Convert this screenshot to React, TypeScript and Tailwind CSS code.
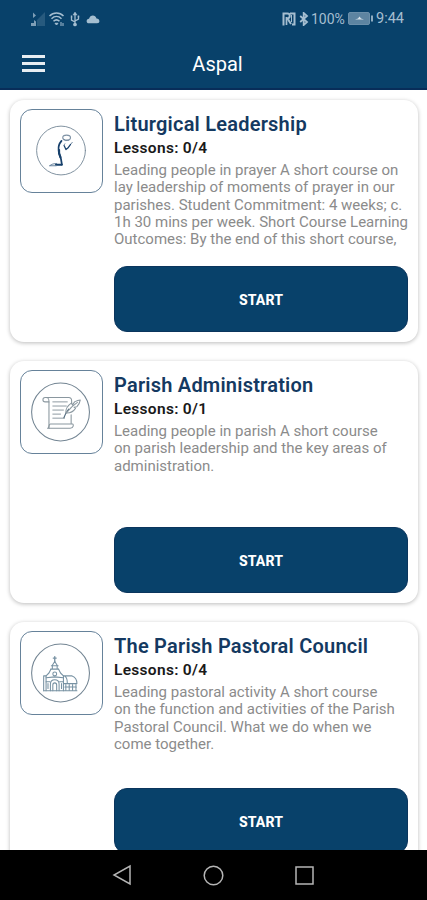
import React from "react";

type Course = {
    title: string;
    lessons: string;
    lines: string[];
    icon: React.ReactNode;
};

const PrayerIcon = () => (
    <svg viewBox="0 0 84 84" className="h-full w-full" fill="none" stroke="#17406b" strokeLinecap="round" strokeLinejoin="round">
        <circle cx="41.500" cy="41.500" r="25.3" stroke="#7c8e9c" strokeWidth="1" />
        <ellipse cx="47.3" cy="28.2" rx="4" ry="2.6" stroke="#7f93a6" strokeWidth="1.2" />
        <path d="M44.500 29.500l2 1.800 3-.6" stroke="#7289a0" strokeWidth="1" />
        <path d="M42 31.500c-2.500 3-3.400 6.500-3 9.500l.4 3.500 2 5.500 1 6" strokeWidth="1.800" />
        <path d="M39.500 41c-.6 3 .5 5 1.500 7.500" strokeWidth="2.200" />
        <path d="M42.300 56.300h-6" strokeWidth="2.200" />
        <path d="M37 54.900l-4 .6-3.500 1.800h7" stroke="#617d99" strokeWidth="1" />
        <path d="M44.800 36.500l1.800 4 2-1.500 2.800-3.800" strokeWidth="1.300" />
        <path d="M44.500 36l1-1.500M52 34.500l1.200-1.500" stroke="#7289a0" strokeWidth="1" />
    </svg>
);

const ScrollIcon = () => (
    <svg viewBox="0 0 84 84" className="h-full w-full" fill="none" stroke="#8a979f" strokeWidth="1.100" strokeLinecap="round" strokeLinejoin="round">
        <circle cx="41" cy="42" r="30" stroke="#738593" strokeWidth="1.100" />
        <path d="M29 31.500h-4c-3 0-3-4.500 0-4.500h24.500c2.500 0 3 1.500 3 3.500v3" />
        <path d="M26 27c3 0 3 2 3 4.500v27.500" />
        <path d="M29 58.800h22c4 0 3.500-4.300 2.500-4.300h-23c-2.500 0-.5 4.300-3 4.300" />
        <path d="M52 45v9" />
        <path d="M33 31.500h15M33 35.800h14M33 40h11M33 44.200h8M33 48.400h12" strokeWidth="1" />
        <path d="M44.500 48c1-3 2.500-6 5-9" stroke="#526b7e" strokeWidth="1.200" />
        <path d="M46.500 43c-.5-5 3-8.500 6-10.500l1 2.500 2-3.500c2-1 4-1.800 6-2-.5 3-2 5.500-3.500 7l-3 .5 1.500 1.200c-2 3-5 5.200-10 4.800z" />
        <path d="M47 43c3-4 7-8 11.500-11" />
    </svg>
);

const ChurchIcon = () => (
    <svg viewBox="0 0 84 84" className="h-full w-full" fill="none" stroke="#7892a3" strokeWidth="1.100" strokeLinecap="round" strokeLinejoin="round">
        <circle cx="41" cy="42" r="30" stroke="#738593" />
        <path d="M35 25v5.500M33.500 26.500h3" strokeWidth="1.400" />
        <path d="M35 30l-2.500 4v4h5v-4zM31.500 34.500h7M31 38h8" />
        <path d="M31 38l-2 4-3 3v15.500M39 38l2 4 3 3v15.500" />
        <circle cx="35" cy="43" r="2" />
        <path d="M26 45h-2.500v15.500M26 47l9-1 9 1" />
        <path d="M30.500 60.500v-7c0-6 9-6 9 0v7M33 60.500v-6c0-3 4-3 4 0v6" />
        <path d="M23.500 60.500h34.500M26 51h4M40 51h4M28 53v5M42 53v5" />
        <path d="M44 45h9c3 1 5 4 5 8h-14M45 45c2 1 3 4 3 7" />
        <path d="M46.500 54v6M50 54v6M53.500 54v6M57 54v6M45.500 56.500h12" />
    </svg>
);

const courses: Course[] = [
    {
        title: "Liturgical Leadership",
        lessons: "Lessons: 0/4",
        lines: [
            "Leading people in prayer A short course on",
            "lay leadership of moments of prayer in our",
            "parishes. Student Commitment: 4 weeks; c.",
            "1h 30 mins per week. Short Course Learning",
            "Outcomes: By the end of this short course,",
        ],
        icon: <PrayerIcon />,
    },
    {
        title: "Parish Administration",
        lessons: "Lessons: 0/1",
        lines: ["Leading people in parish A short course", "on parish leadership and the key areas of", "administration."],
        icon: <ScrollIcon />,
    },
    {
        title: "The Parish Pastoral Council",
        lessons: "Lessons: 0/4",
        lines: [
            "Leading pastoral activity A short course",
            "on the function and activities of the Parish",
            "Pastoral Council. What we do when we",
            "come together.",
        ],
        icon: <ChurchIcon />,
    },
];

const StatusBar = () => (
    <div className="flex h-[37px] items-center justify-between pl-[30px] pr-[23px] text-[#a5bed0]">
        <div className="flex items-center">
            <svg width="16" height="16" viewBox="0 0 16 16" fill="currentColor">
                <path d="M15 1v14H7V9z" opacity=".2" />
                <path d="M3 1.500l3 3L3 7zM1 12h3V9l2 1.500V15H1z" opacity=".75" />
            </svg>
            <svg width="18" height="16" viewBox="0 0 18 16" className="ml-[2px]" fill="none" stroke="currentColor" strokeWidth="1.500">
                <path d="M1.500 5c4-4 10-4 14 0M3.500 7.700c3-2.900 7-2.900 10 0M5.500 10.300c2-1.900 4-1.900 6 0" />
                <path d="M7 12.300h3L8.500 14z" fill="currentColor" strokeWidth="1" />
                <path d="M13 11v4M15 12v3" strokeWidth="1" />
            </svg>
            <svg width="10" height="16" viewBox="0 0 10 16" className="ml-[4px]" fill="none" stroke="currentColor" strokeWidth="1.300">
                <path d="M5 2v11M5 11L1.500 9V6M5 10l3.500-2V5" />
                <path d="M3 4l2-3 2 3z" fill="currentColor" strokeWidth=".5" />
                <circle cx="5" cy="13.500" r="1.200" fill="currentColor" />
                <path d="M.8 5.500h1.500M7.700 5.500h1.500" strokeWidth="2" />
            </svg>
            <svg width="14" height="10" viewBox="0 0 14 10" className="ml-[6px]" fill="currentColor">
                <path d="M3 9.200C-.3 9.200 0 5 3 4.800 4 .5 9.500.2 10.500 4.600c3.500 0 4 4.600.6 4.600z" />
            </svg>
        </div>
        <div className="flex items-center">
            <svg width="14" height="14" viewBox="0 0 14 14" className="mr-[3px]" fill="none" stroke="currentColor">
                <path d="M1.500 13.500V1.500h4c3 0 3 4.500 0 5L9 12" strokeWidth="2" />
                <path d="M4.500 5v8" strokeWidth="1.700" />
                <path d="M8 1.500h4.500v11H10" strokeWidth="2" />
                <path d="M9.500 3v7" strokeWidth="1" />
            </svg>
            <svg width="10" height="14" viewBox="0 0 10 14" className="mr-[2px]" fill="none" stroke="currentColor" strokeWidth="1.800">
                <path d="M1.200 4l6.800 6-3.300 3V1L8 4l-6.800 6" />
            </svg>
            <span className="w-[35px] whitespace-nowrap text-[14px] leading-4">100%</span>
            <svg width="26" height="13" viewBox="0 0 26 13" className="ml-[2px] mr-[2px]">
                <rect x=".5" y=".5" width="21" height="12" rx="1.500" fill="#5d84a1" stroke="#6b8faa" />
                <path d="M23 3.500h2v6h-2z" fill="#8eabc0" />
                <path d="M7 7.500l3-1 1.500-2 1.500 2 3 1z" fill="#d7e2e9" />
            </svg>
            <span className="w-[28px] whitespace-nowrap pt-px text-[14.500px] leading-4">9:44</span>
        </div>
    </div>
);

const CourseCard = ({ title, lessons, lines, icon }: Course) => (
    <article className="flex h-[242px] shrink-0 rounded-[14px] bg-white pl-[10px] pt-[10px] shadow-[0_1px_4px_rgba(0,0,0,0.27)]">
        <div className="-mt-px h-[84px] w-[83px] shrink-0 rounded-[12px] border border-[#66829a]">{icon}</div>
        <div className="ml-[11px] w-[294px] shrink-0">
            <h2 className="mt-[2px] h-[26px] whitespace-nowrap text-[20px] font-semibold leading-[25px] tracking-[0.22px] text-[#143961]">{title}</h2>
            <p className="h-[24px] text-[15.5px] font-semibold leading-[21px] tracking-[0.3px] text-[#191919]">{lessons}</p>
            <div className="h-[104px] whitespace-nowrap text-[15px] leading-[17.3px] text-[#8b8b8b]">
                {lines.map((line) => (
                    <p key={line}>{line}</p>
                ))}
            </div>
            <button className="h-[66px] w-full rounded-[13px] border border-[#0b355d] bg-[#08416a] pt-[2px] text-[14px] font-extrabold tracking-[0.1px] text-white">START</button>
        </div>
    </article>
);

export default function App() {
    return (
        <div className="flex h-[900px] w-[427px] flex-col overflow-hidden bg-white font-['Roboto',sans-serif]">
            <header className="h-[90px] shrink-0 border-b-2 border-[#082d59] bg-[#08416a]">
                <StatusBar />
                <div className="grid h-[52px] grid-cols-[1fr_auto_1fr] items-center px-[22px]">
                    <button aria-label="Menu" className="flex w-[23px] flex-col gap-[4px]">
                        <span className="h-[3px] w-full bg-[#e7edf2]" />
                        <span className="h-[3px] w-full bg-[#e7edf2]" />
                        <span className="h-[3px] w-full bg-[#e7edf2]" />
                    </button>
                    <h1 className="ml-[8px] pt-[2px] text-[20px] leading-6 text-white">Aspal</h1>
                </div>
            </header>
            <main className="flex min-h-0 flex-1 flex-col gap-[19px] overflow-hidden pl-[10px] pr-[9px] pt-[10px]">
                {courses.map((course) => (
                    <CourseCard key={course.title} {...course} />
                ))}
            </main>
            <nav className="flex h-[50px] shrink-0 items-center justify-center gap-[71px] bg-black pr-px">
                <svg width="20" height="22" viewBox="0 0 20 22" fill="none" stroke="#b5b5b5" strokeWidth="1.500">
                    <path d="M18 2v18L2 11z" />
                </svg>
                <svg width="21" height="21" viewBox="0 0 21 21" fill="none" stroke="#b5b5b5" strokeWidth="1.500">
                    <circle cx="10.500" cy="10.500" r="9.300" />
                </svg>
                <svg width="19" height="19" viewBox="0 0 19 19" fill="none" stroke="#b5b5b5" strokeWidth="1.500">
                    <path d="M1 1h17v17H1z" />
                </svg>
            </nav>
        </div>
    );
}
